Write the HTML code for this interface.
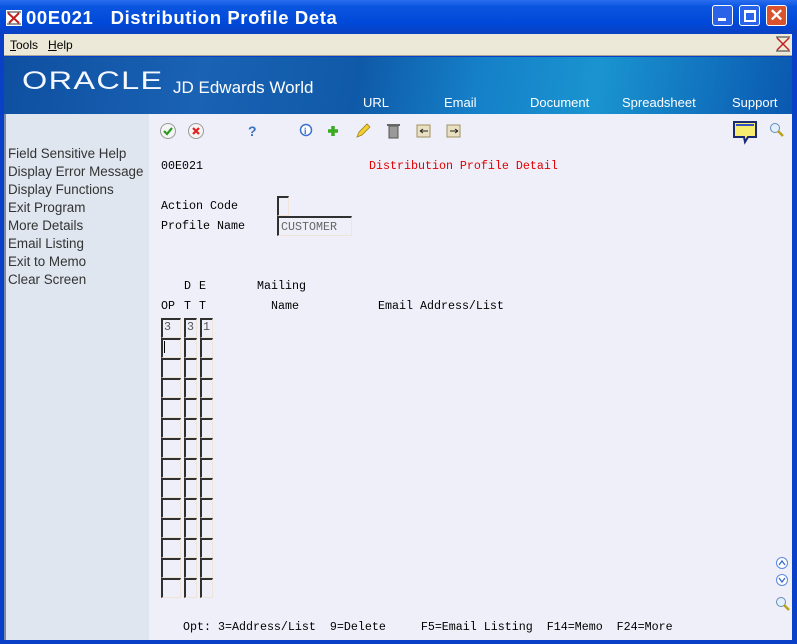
<!DOCTYPE html>
<html><head><meta charset="utf-8"><style>
*{margin:0;padding:0;box-sizing:border-box}
body{width:797px;height:644px;overflow:hidden;position:relative;background:#0a3fc8;font-family:"Liberation Sans",sans-serif}
.abs{position:absolute}
.mono{font-family:"Liberation Mono",monospace;font-size:11.67px;color:#000;white-space:pre;position:absolute;line-height:14px}
.tb{left:0;top:0;width:797px;height:34px;background:linear-gradient(#2a6ef0,#0a55e0 20%,#0048d8 70%,#0a40c0);}
.menu{left:4px;top:34px;width:788px;height:22px;background:#ece9d8;border-bottom:1px solid #a8a595}
.banner{left:4px;top:57px;width:788px;height:57px;background:linear-gradient(100deg,#0e4fa0 0%,#1a62b4 25%,#0f5aa8 45%,#1580c8 60%,#1a94d0 75%,#0a58b0 100%)}
.left{left:6px;top:114px;width:143px;height:526px;background:#dfe6ef}
.main{left:149px;top:114px;width:643px;height:526px;background:#eeeff8}
.lk{position:absolute;left:8px;font-size:13.4px;color:#333}
.bn{position:absolute;color:#fff;font-size:13px;top:95px}
.fld{position:absolute;border-left:2px solid #303030;border-top:2px solid #303030;border-right:1px solid #f0e4d8;border-bottom:1px solid #f0e4d8;height:20px}
.ctl{position:absolute;top:5px;width:21px;height:21px;border:1px solid #fff;border-radius:3px}
</style></head><body>
<div class="abs tb"></div>
<svg class="abs" style="left:6px;top:10px" width="16" height="16"><rect width="16" height="16" fill="#fff"/><path d="M2 3 L13 13 M3 13 L13 3" stroke="#c02020" stroke-width="2"/><path d="M1 2h14M1 14h14" stroke="#333"/></svg>
<div class="abs" style="left:26px;top:7px;color:#fff;font-weight:bold;font-size:18.5px;letter-spacing:0.6px">00E021&nbsp;&nbsp;&nbsp;Distribution Profile Deta</div>
<div class="ctl" style="left:712px;background:#2a62e8"><div class="abs" style="left:5px;top:12px;width:8px;height:3px;background:#fff"></div></div>
<div class="ctl" style="left:739px;background:#2a62e8"><div class="abs" style="left:4px;top:4px;width:12px;height:12px;border:2px solid #fff;border-top-width:3px"></div></div>
<div class="ctl" style="left:766px;background:#d8532e;color:#fff;font-weight:bold;font-size:17px;line-height:19px;text-align:center">✕</div>
<div class="abs menu"></div>
<div class="abs" style="left:10px;top:38px;font-size:12px"><u>T</u>ools&nbsp;&nbsp; <u>H</u>elp</div>
<svg class="abs" style="left:775px;top:36px" width="16" height="16"><path d="M2 2 L14 14 M2 14 L14 2" stroke="#c02020" stroke-width="1.5"/><path d="M1 1h14M1 15h14" stroke="#333"/></svg>
<div class="abs banner"></div>
<div class="abs" style="left:22px;top:68px;color:#f4f8ff;font-size:25px;letter-spacing:1px;transform:scaleX(1.3);transform-origin:left;line-height:26px">ORACLE</div>
<div class="abs" style="left:173px;top:78px;color:#fff;font-size:17px">JD Edwards World</div>
<div class="bn" style="left:363px">URL</div>
<div class="bn" style="left:444px">Email</div>
<div class="bn" style="left:530px">Document</div>
<div class="bn" style="left:622px">Spreadsheet</div>
<div class="bn" style="left:732px">Support</div>
<div class="abs left"></div>
<div class="abs main"></div>
<div class="abs" style="left:4px;top:114px;width:2px;height:526px;background:#7a8aa8"></div>
<div class="lk" style="top:146px">Field Sensitive Help</div>
<div class="lk" style="top:164px">Display Error Message</div>
<div class="lk" style="top:182px">Display Functions</div>
<div class="lk" style="top:200px">Exit Program</div>
<div class="lk" style="top:218px">More Details</div>
<div class="lk" style="top:236px">Email Listing</div>
<div class="lk" style="top:254px">Exit to Memo</div>
<div class="lk" style="top:272px">Clear Screen</div>
<svg class="abs" style="left:159px;top:122px" width="320" height="20">
<circle cx="9" cy="9" r="7.5" fill="#f4f4f4" stroke="#999"/><path d="M5 9 l3 3 l5 -6" stroke="#2a9a20" stroke-width="2.2" fill="none"/>
<circle cx="37" cy="9" r="7.5" fill="#f4f4f4" stroke="#999"/><path d="M34 6 l6 6 M40 6 l-6 6" stroke="#e02020" stroke-width="2.2"/>
<text x="89" y="14" fill="#3a70c0" font-size="14" font-weight="bold" font-family="Liberation Sans">?</text>
<circle cx="147" cy="8" r="5.5" fill="#fff" stroke="#3a70d0" stroke-width="1.5"/><text x="145" y="12" fill="#3a70d0" font-size="9" font-weight="bold" font-family="Liberation Serif">i</text>
<path d="M174 4v10M169 9h10" stroke="#3aaa20" stroke-width="3.5"/>
<path d="M198 15 l2 -5 l8 -8 l3 3 l-8 8z" fill="#f0d030" stroke="#a08020" stroke-width="0.8"/>
<rect x="230" y="4" width="9" height="12" fill="#999" stroke="#555"/><rect x="228" y="2" width="13" height="2" fill="#666"/>
<rect x="258" y="3" width="13" height="12" fill="#e8e0c0" stroke="#a09060"/><path d="M261 9h8M261 9l3 -2M261 9l3 2" stroke="#222"/>
<rect x="288" y="3" width="13" height="12" fill="#e8e0c0" stroke="#a09060"/><path d="M291 9h8M299 9l-3 -2M299 9l-3 2" stroke="#222"/>
</svg>
<svg class="abs" style="left:732px;top:120px" width="60" height="25">
<path d="M2 2h22v15h-8l-3 5l-1 -5h-10z" fill="#f8ec70" stroke="#1a2a70" stroke-width="2"/><rect x="4" y="4" width="18" height="2" fill="#3050c0"/>
<circle cx="43" cy="8" r="4.5" fill="#e0f0ff" stroke="#6a8ab0"/><path d="M46 11l5 5" stroke="#b8a020" stroke-width="2.5"/>
</svg>
<div class="mono" style="left:161px;top:159px">00E021</div>
<div class="mono" style="left:369px;top:159px;color:#e00000">Distribution Profile Detail</div>
<div class="mono" style="left:161px;top:199px">Action Code</div>
<div class="mono" style="left:161px;top:219px">Profile Name</div>
<div class="fld" style="left:277px;top:196px;width:12px"></div>
<div class="fld" style="left:277px;top:216px;width:75px"></div>
<div class="mono" style="left:281px;top:220px;color:#666">CUSTOMER</div>
<div class="mono" style="left:184px;top:279px">D</div>
<div class="mono" style="left:199px;top:279px">E</div>
<div class="mono" style="left:257px;top:279px">Mailing</div>
<div class="mono" style="left:161px;top:299px">OP</div>
<div class="mono" style="left:184px;top:299px">T</div>
<div class="mono" style="left:199px;top:299px">T</div>
<div class="mono" style="left:271px;top:299px">Name</div>
<div class="mono" style="left:378px;top:299px">Email Address/List</div>
<div id="grid"></div>
<div class="mono" style="left:164px;top:320px;color:#555">3</div>
<div class="mono" style="left:187px;top:320px;color:#555">3</div>
<div class="mono" style="left:203px;top:320px;color:#555">1</div>
<div class="abs" style="left:164px;top:341px;width:1px;height:12px;background:#000"></div>
<div class="mono" style="left:183px;top:620px">Opt: 3=Address/List  9=Delete     F5=Email Listing  F14=Memo  F24=More</div>
<svg class="abs" style="left:774px;top:556px" width="18" height="60">
<circle cx="8" cy="7" r="5.5" fill="#fff" stroke="#5a8ae0"/><path d="M5 9l3-4l3 4" stroke="#3a6ad0" fill="none" stroke-width="1.3"/>
<circle cx="8" cy="24" r="5.5" fill="#fff" stroke="#5a8ae0"/><path d="M5 22l3 4l3-4" stroke="#3a6ad0" fill="none" stroke-width="1.3"/>
<circle cx="7" cy="46" r="4.5" fill="#e0f0ff" stroke="#6a8ab0"/><path d="M10 49l5 5" stroke="#b8a020" stroke-width="2.5"/>
</svg>
<div class="abs" style="left:792px;top:34px;width:5px;height:610px;background:#0a3fc8"></div>
<div class="abs" style="left:0;top:640px;width:797px;height:4px;background:#0a3fc8"></div>
<script>
var g='';for(var i=0;i<14;i++){var y=318+i*20;g+='<div class="fld" style="left:161px;top:'+y+'px;width:20px"></div><div class="fld" style="left:184px;top:'+y+'px;width:13px"></div><div class="fld" style="left:200px;top:'+y+'px;width:13px"></div>';}
document.getElementById('grid').innerHTML=g;
</script>
</body></html>
